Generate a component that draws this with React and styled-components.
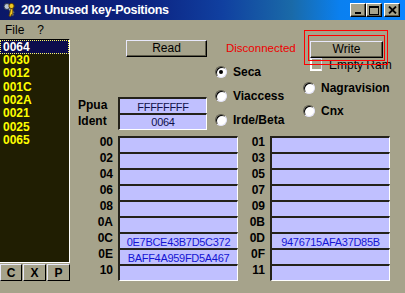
import React from "react"
import styled, { createGlobalStyle } from "styled-components"

const GlobalStyle = createGlobalStyle`
  html, body {
    margin: 0;
    padding: 0;
    width: 405px;
    height: 293px;
    overflow: hidden;
    background: #a6a38b;
  }
  body {
    font-family: "Liberation Sans", Arial, sans-serif;
    font-size: 12px;
    color: #000;
  }
`

const Window = styled.div`
  width: 405px;
  height: 293px;
  background: #a6a38b;
  display: flex;
  flex-direction: column;
`

const TitleBar = styled.div`
  height: 20px;
  flex: none;
  display: flex;
  align-items: center;
  padding: 0 5px 0 2px;
  background: linear-gradient(
    90deg,
    #0b1868 0%,
    #0c2280 35%,
    #1040a0 55%,
    #1a6aa8 72%,
    #0a80f0 84%,
    #0a84ff 100%
  );
`

const Title = styled.span`
  margin-left: 3px;
  color: #fff;
  font-weight: bold;
  font-size: 12.5px;
  letter-spacing: -0.3px;
  white-space: nowrap;
`

const Controls = styled.div`
  margin-left: auto;
  display: flex;
  align-items: center;
`

const CtrlButton = styled.div`
  box-sizing: border-box;
  width: 16px;
  height: 14px;
  margin-left: ${(p) => p.$gap || 0}px;
  background: #a6a38b;
  border: 1px solid;
  border-color: #fff #000 #000 #fff;
  box-shadow: inset -1px -1px 0 #5c5a48;
  display: flex;
  align-items: center;
  justify-content: center;
`

const MenuBar = styled.div`
  height: 18px;
  flex: none;
  display: flex;
  align-items: center;
  padding: 2px 0 0 5px;
  box-sizing: border-box;
`

const MenuItem = styled.span`
  margin-right: ${(p) => p.$space || 0}px;
`

const Body = styled.div`
  flex: 1;
  display: flex;
`

const LeftPane = styled.div`
  width: 70px;
  flex: none;
  display: flex;
  flex-direction: column;
`

const ListBox = styled.div`
  box-sizing: border-box;
  margin-top: 1px;
  height: 224px;
  background: #201e02;
  border-top: 1px solid #000;
  border-right: 1px solid #fff;
  border-bottom: 1px solid #fff;
`

const ListItem = styled.div`
  height: ${(p) => (p.$selected ? 14 : 13.33)}px;
  line-height: ${(p) => (p.$selected ? 14 : 13.33)}px;
  padding-left: 3px;
  font-weight: bold;
  font-size: 12px;
  color: ${(p) => (p.$selected ? "#fff" : "#ffff00")};
  background: ${(p) => (p.$selected ? "#0c0c4c" : "transparent")};
  outline: ${(p) => (p.$selected ? "1px dotted #ffff60" : "none")};
  outline-offset: -1px;
`

const ListButtons = styled.div`
  display: flex;
  gap: 1px;
  margin-top: 1px;
`

const SmallButton = styled.div`
  box-sizing: border-box;
  width: ${(p) => p.$w}px;
  height: 17px;
  background: #a6a38b;
  border: 1px solid;
  border-color: #e8e8f8 #000 #000 #e8e8f8;
  font-weight: bold;
  font-size: 12px;
  display: flex;
  align-items: center;
  justify-content: center;
`

const Content = styled.div`
  flex: 1;
  display: flex;
  flex-direction: column;
`

const TopRow = styled.div`
  margin-top: 1px;
  height: 18px;
  display: flex;
  align-items: center;
`

const PushButton = styled.div`
  box-sizing: border-box;
  width: ${(p) => p.$w}px;
  height: 17px;
  margin-left: ${(p) => p.$ml || 0}px;
  background: #a6a38b;
  border: 1px solid;
  border-color: #e8e8fc #000 #000 #e8e8fc;
  box-shadow: inset -1px -1px 0 #5c5a48;
  display: flex;
  align-items: center;
  justify-content: center;
  font-size: 12px;
`

const Status = styled.span`
  width: 84px;
  margin-left: 19px;
  color: #ee0000;
  font-size: 11.5px;
  white-space: nowrap;
`

const WriteWrap = styled.div`
  position: relative;
  z-index: 2;
  margin-top: 2px;
`

const Highlight = styled.div`
  position: absolute;
  left: ${(p) => p.$l}px;
  top: ${(p) => p.$t}px;
  right: ${(p) => p.$r}px;
  bottom: ${(p) => p.$b}px;
  border: 1px solid #ff0000;
  pointer-events: none;
`

const MidRow = styled.div`
  height: 71px;
  display: flex;
  align-items: flex-start;
`

const IdentBlock = styled.div`
  width: 137px;
  height: 72px;
  display: flex;
  flex-direction: column;
  justify-content: flex-end;
`

const IdentRow = styled.div`
  display: flex;
  align-items: center;
  height: 16px;
`

const IdentLabel = styled.span`
  width: 40px;
  padding-left: 8px;
  font-weight: bold;
  font-size: 12px;
`

const Field = styled.div`
  box-sizing: border-box;
  width: ${(p) => p.$w || 120}px;
  height: ${(p) => (p.$last ? 17 : 16)}px;
  background: #c0c0ff;
  border-top: 2px solid #24221a;
  border-left: 2px solid #24221a;
  border-right: 1px solid #fff;
  border-bottom: ${(p) => (p.$last ? "1px solid #fff" : "none")};
  color: ${(p) => p.$color || "#1414d4"};
  font-size: 11px;
  letter-spacing: -0.3px;
  line-height: 14px;
  padding-top: 0.5px;
  text-align: center;
  white-space: nowrap;
  overflow: hidden;
`

const RadioCol = styled.div`
  width: ${(p) => p.$w}px;
  margin-left: ${(p) => p.$ml || 0}px;
  padding-top: ${(p) => p.$pt || 0}px;
  display: flex;
  flex-direction: column;
`

const RadioItem = styled.div`
  height: ${(p) => p.$h || 24}px;
  display: flex;
  align-items: center;
  gap: 6px;
  font-weight: bold;
  font-size: 12px;
  white-space: nowrap;
`

const RadioDot = styled.span`
  box-sizing: border-box;
  width: 12px;
  height: 12px;
  flex: none;
  border-radius: 50%;
  background: #fff;
  border: 1px solid;
  border-color: #5a584a #e4e4f8 #e4e4f8 #5a584a;
  box-shadow: inset 1px 1px 0 #000;
  display: flex;
  align-items: center;
  justify-content: center;
  &::after {
    content: "";
    width: 4px;
    height: 4px;
    border-radius: 50%;
    background: #000;
    display: ${(p) => (p.$checked ? "block" : "none")};
  }
`

const CheckRow = styled.div`
  height: 14px;
  margin-top: 0px;
  margin-left: 7px;
  display: flex;
  align-items: flex-end;
  gap: 7px;
  white-space: nowrap;
`

const CheckBox = styled.span`
  box-sizing: border-box;
  width: 12px;
  height: 13px;
  border: 1px solid #d8d8f0;
  border-left: 2px solid #fff;
  border-bottom: 2px solid #fff;
`

const CheckLabel = styled.span`
  font-size: 12px;
  line-height: 12px;
`

const KeyGrid = styled.div`
  margin-top: 8px;
  display: grid;
  grid-template-columns: 48px 120px 32px 120px;
  grid-auto-rows: 16px;
`

const RowLabel = styled.div`
  text-align: right;
  padding-right: 5px;
  font-weight: bold;
  font-size: 12px;
  line-height: 13px;
`

const KeysIcon = () => (
  <svg width="16" height="16" viewBox="0 0 16 16">
    <circle cx="5" cy="4.5" r="3" fill="#b8c4d8" stroke="#303848" />
    <path d="M6.5 7 L10 14 L12 13 L11 11 L12.5 10.5 L8.5 5.5 Z" fill="#b8c4d8" stroke="#303848" strokeWidth="0.8" />
    <circle cx="9.5" cy="4" r="2.6" fill="#f0c820" stroke="#604000" />
    <path d="M9 6.5 L7 14 L8.8 14.5 L9.3 12.5 L10.6 12.8 L10.8 6.8 Z" fill="#f0c820" stroke="#604000" strokeWidth="0.8" />
  </svg>
)

const MinIcon = () => (
  <svg width="8" height="8" viewBox="0 0 8 8">
    <rect x="1" y="6" width="6" height="2" fill="#000" />
  </svg>
)

const MaxIcon = () => (
  <svg width="10" height="9" viewBox="0 0 10 9">
    <rect x="0.5" y="0.5" width="9" height="8" fill="none" stroke="#000" />
    <rect x="0" y="0" width="10" height="2" fill="#000" />
  </svg>
)

const CloseIcon = () => (
  <svg width="9" height="8" viewBox="0 0 9 8">
    <path d="M1 0.5 L8 7.5 M8 0.5 L1 7.5" stroke="#000" strokeWidth="1.8" />
  </svg>
)

const listItems = ["0064", "0030", "0012", "001C", "002A", "0021", "0025", "0065"]

const keyRows = [
  ["00", "", "01", ""],
  ["02", "", "03", ""],
  ["04", "", "05", ""],
  ["06", "", "07", ""],
  ["08", "", "09", ""],
  ["0A", "", "0B", ""],
  ["0C", "0E7BCE43B7D5C372", "0D", "9476715AFA37D85B"],
  ["0E", "BAFF4A959FD5A467", "0F", ""],
  ["10", "", "11", ""],
]

export default function App() {
  return (
    <Window>
      <GlobalStyle />
      <TitleBar>
        <KeysIcon />
        <Title>202 Unused key-Positions</Title>
        <Controls>
          <CtrlButton>
            <MinIcon />
          </CtrlButton>
          <CtrlButton>
            <MaxIcon />
          </CtrlButton>
          <CtrlButton $gap={2}>
            <CloseIcon />
          </CtrlButton>
        </Controls>
      </TitleBar>
      <MenuBar>
        <MenuItem $space={13}>File</MenuItem>
        <MenuItem>?</MenuItem>
      </MenuBar>
      <Body>
        <LeftPane>
          <ListBox>
            {listItems.map((item, i) => (
              <ListItem key={item} $selected={i === 0}>
                {item}
              </ListItem>
            ))}
          </ListBox>
          <ListButtons>
            <SmallButton $w={22}>C</SmallButton>
            <SmallButton $w={23}>X</SmallButton>
            <SmallButton $w={23}>P</SmallButton>
          </ListButtons>
        </LeftPane>
        <Content>
          <TopRow>
            <PushButton $w={81} $ml={56}>Read</PushButton>
            <Status>Disconnected</Status>
            <WriteWrap>
              <PushButton $w={73}>Write</PushButton>
              <Highlight $l={-2} $t={-6} $r={-2} $b={-3} />
              <Highlight $l={-6} $t={-11} $r={-5} $b={-7} />
            </WriteWrap>
          </TopRow>
          <MidRow>
            <IdentBlock>
              <IdentRow>
                <IdentLabel>Ppua</IdentLabel>
                <Field $w={89} $color="#10104a">FFFFFFFF</Field>
              </IdentRow>
              <IdentRow>
                <IdentLabel>Ident</IdentLabel>
                <Field $w={89} $color="#10104a" $last>
                  0064
                </Field>
              </IdentRow>
            </IdentBlock>
            <RadioCol $w={88} $ml={8} $pt={3}>
              <RadioItem>
                <RadioDot $checked />
                Seca
              </RadioItem>
              <RadioItem>
                <RadioDot />
                Viaccess
              </RadioItem>
              <RadioItem>
                <RadioDot />
                Irde/Beta
              </RadioItem>
            </RadioCol>
            <RadioCol $w={100}>
              <CheckRow>
                <CheckBox />
                <CheckLabel>Empty Ram</CheckLabel>
              </CheckRow>
              <div style={{ height: 5 }} />
              <RadioItem $h={23}>
                <RadioDot />
                Nagravision
              </RadioItem>
              <RadioItem $h={23}>
                <RadioDot />
                Cnx
              </RadioItem>
            </RadioCol>
          </MidRow>
          <KeyGrid>
            {keyRows.map(([l1, v1, l2, v2], i) => (
              <React.Fragment key={l1}>
                <RowLabel>{l1}</RowLabel>
                <Field $last={i === keyRows.length - 1}>{v1}</Field>
                <RowLabel>{l2}</RowLabel>
                <Field $last={i === keyRows.length - 1}>{v2}</Field>
              </React.Fragment>
            ))}
          </KeyGrid>
        </Content>
      </Body>
    </Window>
  )
}
